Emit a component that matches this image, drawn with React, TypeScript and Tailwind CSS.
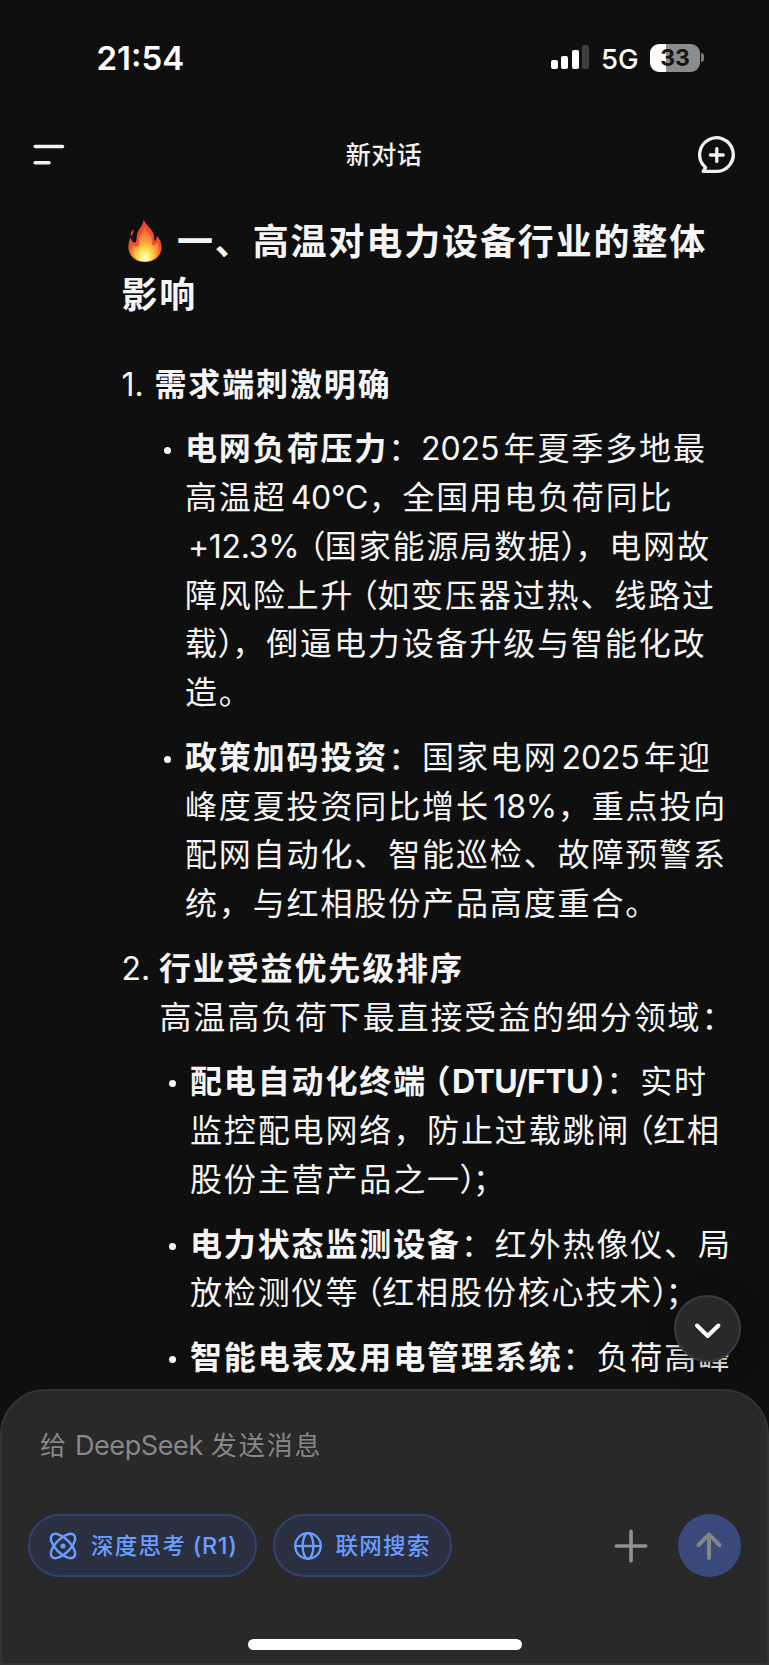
import type { ReactNode } from "react";

const CJK = "font-['Inter','Noto_Sans_CJK_SC',sans-serif]";

function Line({ children }: { children: ReactNode }) {
  return <div className="h-[48.750px] whitespace-nowrap leading-[48.750px]">{children}</div>;
}

function Open() {
  return <span className="ml-[7.500px] mr-[-0.700px] tracking-normal [font-feature-settings:'halt']">（</span>;
}

function Close({ className = "mr-[-1.100px]" }: { className?: string }) {
  return <span className={`ml-[-1.500px] tracking-normal [font-feature-settings:'halt'] ${className}`}>）</span>;
}

function Num({ children, className = "" }: { children: ReactNode; className?: string }) {
  return <span className={`inline-block ${className}`}>{children}</span>;
}

function Bullet({ children }: { children: ReactNode }) {
  return (
    <li className="flex">
      <span className="mt-[22px] mr-[14px] size-[7px] shrink-0 rounded-full bg-[#f7f7f7]" />
      <div>{children}</div>
    </li>
  );
}

function Flame() {
  return (
    <svg viewBox="0 0 34 44" className="h-[44px] w-[34px]">
      <defs>
        <linearGradient id="outer" x1="0" y1="0" x2="0" y2="1">
          <stop offset="0" stopColor="#ea4a2c" />
          <stop offset="0.65" stopColor="#f3502c" />
          <stop offset="1" stopColor="#f9a02e" />
        </linearGradient>
        <radialGradient id="inner" cx="0.5" cy="0.9" r="0.8">
          <stop offset="0" stopColor="#fffee0" />
          <stop offset="0.18" stopColor="#fff38a" />
          <stop offset="0.36" stopColor="#fed643" />
          <stop offset="0.6" stopColor="#fb9c3a" />
          <stop offset="1" stopColor="#f4673c" />
        </radialGradient>
      </defs>
      <path fill="url(#outer)" d="M15.800 .5C17 6 24.500 9 25.800 16C26.300 19 25.800 21 26.800 22C28.300 22 28.800 19.500 28.700 17C32 20 33.800 24 33.500 29C33 37 26.500 43 17 43C7.500 43 1 37 .5 29.500C.2 25 1.300 21 2.300 18.500C3 21 4.500 23.500 6.800 23.500C9 23 8.200 20 9 16C10 10 14.800 7.500 15.800 .5Z" />
      <path fill="#e8452a" d="M5.500 10.500C2.800 12.300 2.200 14.500 2.800 17C4.800 16 5.800 13.500 5.500 10.500Z" />
      <path fill="url(#inner)" d="M16.500 8C17.500 12 23 15 23.600 20.500C23.900 23.500 23.500 26 25 26.500C27 26.500 28.500 25 29.500 23C32 31 29 42.500 17 42.500C5 42.500 2 33 4.500 26C5.500 27.500 7.500 28 9 27.500C12 26.500 10.500 22 11.500 18C12.500 14 16 13 16.500 8Z" />
    </svg>
  );
}

function StatusBar() {
  return (
    <div className="flex h-[114px] items-start pl-[96.500px] pr-[65px] pt-[37.500px]">
      <span className="text-[33px] font-semibold leading-[40px] text-white">21:54</span>
      <div className="ml-auto flex items-center pt-[5px]">
        <div className="flex h-[28px] items-end gap-[3.500px] pb-[2.500px]">
          <i className="h-[9px] w-[7px] rounded-[2px] bg-white" />
          <i className="h-[13.500px] w-[7px] rounded-[2px] bg-white" />
          <i className="h-[19px] w-[7px] rounded-[2px] bg-white" />
          <i className="h-[24px] w-[7px] rounded-[2px] bg-[#3f3f3f]" />
        </div>
        <span className="ml-[12px] w-[38px] pt-[2px] text-[27.500px] font-medium leading-[28px] text-white">5G</span>
        <div className="ml-[11px] flex h-[28px] w-[50px] items-center justify-center rounded-[9px] bg-linear-to-r from-white from-33% to-[#8b8b8b] to-33% text-[23px] font-bold leading-[28px] text-[#151515]">
          33
        </div>
        <i className="ml-[1px] h-[9px] w-[3px] rounded-r-full bg-[#7a7a7a]" />
      </div>
    </div>
  );
}

function Header() {
  return (
    <header className="flex h-[82px] items-center justify-between px-[33px]">
      <svg viewBox="0 0 38 24" className="h-[24px] w-[38px]" stroke="#f2f2f2" strokeWidth="3.600" strokeLinecap="round">
        <path d="M2.200 3.500H29.500M2.200 19.700H16" />
      </svg>
      <h1 className="mr-[1px] pt-[2px] text-[25px] font-medium tracking-[0.500px] text-[#f2f2f2]">新对话</h1>
      <svg viewBox="0 0 38 38" className="size-[38px]" fill="none" stroke="#f2f2f2" strokeWidth="3.300" strokeLinecap="round" strokeLinejoin="round">
        <path d="M18.800 35.400H5.200L7.600 31.600L6.500 30.400A16.800 16.800 0 1 1 18.800 35.400Z" />
        <path d="M18.800 12.600V25.400M12.400 19H25.200" />
      </svg>
    </header>
  );
}

function Answer() {
  return (
    <article className="pl-[121.500px] text-[32px] tracking-[1.870px] text-[#f5f5f5] [text-spacing-trim:space-all]">
      <h2 className="whitespace-nowrap pt-[20px] text-[36px] font-bold leading-[53px] tracking-[1.870px]">
        <div className="flex">
          <span className="ml-[6px] mt-[3px] flex h-[48px] w-[49.500px]">
            <Flame />
          </span>
          一、高温对电力设备行业的整体
        </div>
        <div>影响</div>
      </h2>
      <ol className="mt-[38.500px] flex flex-col gap-[16px]">
        <li>
          <Line>
            <Num className="w-[33px] tracking-normal">1.</Num>
            <b>需求端刺激明确</b>
          </Line>
          <ul className="mt-[16px] ml-[42.500px] flex flex-col gap-[16px]">
            <Bullet>
              <Line><b>电网负荷压力</b>：<Num className="ml-[-1px] w-[82.500px] tracking-[-0.150px]">2025</Num>年夏季多地最</Line>
              <Line>高温超<Num className="w-[82px] pl-[4px] tracking-[-0.200px]">40°C</Num>，全国用电负荷同比</Line>
              <Line><Num className="w-[117px] pl-[3px] tracking-[-0.300px]">+12.3%</Num><Open />国家能源局数据<Close />，电网故</Line>
              <Line>障风险上升<Open />如变压器过热、线路过</Line>
              <Line>载<Close />，倒逼电力设备升级与智能化改</Line>
              <Line>造。</Line>
            </Bullet>
            <Bullet>
              <Line><b>政策加码投资</b>：国家电网<Num className="w-[86.500px] pl-[4px] tracking-[-0.150px]">2025</Num>年迎</Line>
              <Line>峰度夏投资同比增长<Num className="w-[68px] pl-[3.500px] tracking-[-0.200px]">18%</Num>，重点投向</Line>
              <Line>配网自动化、智能巡检、故障预警系</Line>
              <Line>统，与红相股份产品高度重合。</Line>
            </Bullet>
          </ul>
        </li>
        <li>
          <Line>
            <Num className="w-[37.500px] tracking-normal">2.</Num>
            <b>行业受益优先级排序</b>
          </Line>
          <div className="pl-[38px]"><Line>高温高负荷下最直接受益的细分领域：</Line></div>
          <ul className="mt-[16px] ml-[47.500px] flex flex-col gap-[16px]">
            <Bullet>
              <Line><b>配电自动化终端<Open /><Num className="ml-[2px] w-[140.500px] tracking-[-0.600px]">DTU/FTU</Num><Close className="mr-[-0.600px]" /></b>：实时</Line>
              <Line>监控配电网络，防止过载跳闸<Open />红相</Line>
              <Line>股份主营产品之一<Close className="mr-[-2.700px]" />；</Line>
            </Bullet>
            <Bullet>
              <Line><b>电力状态监测设备</b>：红外热像仪、局</Line>
              <Line>放检测仪等<Open />红相股份核心技术<Close className="mr-[-2.200px]" />；</Line>
            </Bullet>
            <Bullet>
              <Line><b>智能电表及用电管理系统</b>：负荷高峰</Line>
            </Bullet>
          </ul>
        </li>
      </ol>
    </article>
  );
}

function AtomIcon() {
  return (
    <svg viewBox="0 0 28 28" className="size-[28px]" fill="none" stroke="#6b9cff" strokeWidth="2.500">
      <ellipse cx="14" cy="14" rx="15.500" ry="7.300" transform="rotate(45 14 14)" />
      <ellipse cx="14" cy="14" rx="15.500" ry="7.300" transform="rotate(-45 14 14)" />
      <circle cx="14" cy="14" r="2.600" fill="#6b9cff" stroke="none" />
    </svg>
  );
}

function GlobeIcon() {
  return (
    <svg viewBox="0 0 28 28" className="size-[28px]" fill="none" stroke="#6b9cff" strokeWidth="2.300">
      <circle cx="14" cy="14" r="12.800" />
      <ellipse cx="14" cy="14" rx="5.400" ry="12.800" />
      <path d="M1.200 14H26.800" />
    </svg>
  );
}

function Composer() {
  return (
    <footer className="absolute inset-x-0 top-[1389px] flex h-[276px] flex-col rounded-t-[46px] border-2 border-[#333333] bg-[#292929]">
      <div className="mt-[35px] pl-[38px] text-[26px] leading-[40px] tracking-[1.900px] text-[#87878a]">
        给<span className="ml-[7px] mr-[8px] text-[27px] tracking-[-0.400px]">DeepSeek</span>发送消息
      </div>
      <div className="mt-[48px] flex items-center pl-[26px] pr-[26.500px] text-[22.500px] font-medium leading-[32px] tracking-[1.300px] text-[#6b9cff]">
        <button className="flex h-[63px] w-[229px] items-center whitespace-nowrap rounded-full border-2 border-[#2f4270] bg-[#2a3041] pl-[19px]">
          <AtomIcon />
          <span className="ml-[14px]">深度思考<span className="ml-[6.500px] text-[23.500px] tracking-[0.600px]">(R1)</span></span>
        </button>
        <button className="ml-[16px] flex h-[63px] w-[179px] items-center whitespace-nowrap rounded-full border-2 border-[#2f4270] bg-[#2a3041] pl-[19px]">
          <GlobeIcon />
          <span className="ml-[13.500px]">联网搜索</span>
        </button>
        <svg viewBox="0 0 34 34" className="ml-auto mr-[29.500px] size-[34px]" stroke="#919191" strokeWidth="3.600" strokeLinecap="round">
          <path d="M17 2.300V31.700M2.300 17H31.700" />
        </svg>
        <button className="flex size-[63px] items-center justify-center rounded-full bg-[#3a4a7c]">
          <svg viewBox="0 0 28 30" className="h-[30px] w-[28px]" fill="none" stroke="#858585" strokeWidth="4" strokeLinecap="round" strokeLinejoin="round">
            <path d="M14 27V3.600M3.500 14L14 3.600L24.500 14" />
          </svg>
        </button>
      </div>
      <div className="mt-[62px] h-[11px] w-[274px] self-center rounded-full bg-white" />
    </footer>
  );
}

export default function App() {
  return (
    <div className={`relative h-[1665px] w-[769px] overflow-hidden bg-[#0f0f0f] ${CJK}`}>
      <StatusBar />
      <Header />
      <Answer />
      <Composer />
      <button className="absolute left-[674px] top-[1295px] flex size-[67px] items-center justify-center rounded-full border-2 border-[#3b3b3b] bg-[#292929] shadow-[0_4px_24px_rgba(0,0,0,0.35)]">
        <svg viewBox="0 0 28 18" className="mt-[4px] h-[18px] w-[28px]" fill="none" stroke="#fff" strokeWidth="4" strokeLinecap="round" strokeLinejoin="round">
          <path d="M3 3.500L13.700 14L24.400 3.500" />
        </svg>
      </button>
    </div>
  );
}
